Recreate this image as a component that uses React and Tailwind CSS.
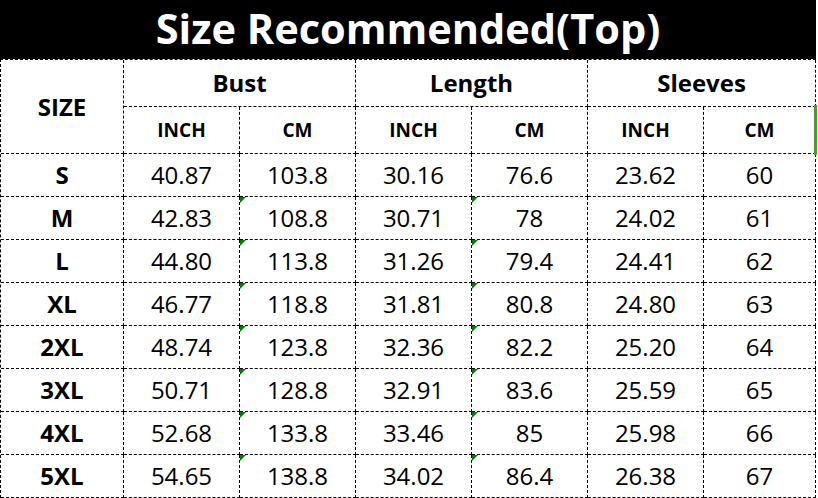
import React from "react";

const rows = [
  ["S", "40.87", "103.8", "30.16", "76.6", "23.62", "60"],
  ["M", "42.83", "108.8", "30.71", "78", "24.02", "61"],
  ["L", "44.80", "113.8", "31.26", "79.4", "24.41", "62"],
  ["XL", "46.77", "118.8", "31.81", "80.8", "24.80", "63"],
  ["2XL", "48.74", "123.8", "32.36", "82.2", "25.20", "64"],
  ["3XL", "50.71", "128.8", "32.91", "83.6", "25.59", "65"],
  ["4XL", "52.68", "133.8", "33.46", "85", "25.98", "66"],
  ["5XL", "54.65", "138.8", "34.02", "86.4", "26.38", "67"],
];

const cell = "border-r border-b border-dashed border-black flex items-center justify-center relative";

function Tri() {
  return (
    <div className="absolute left-0 top-0 w-0 h-0 border-t-[6px] border-t-[#008000] border-r-[6px] border-r-transparent" />
  );
}

export default function App() {
  return (
    <div
      className="w-[818px] h-[498px] bg-white relative overflow-hidden text-black"
      style={{ fontFamily: '"Open Sans", "Noto Sans", sans-serif' }}
    >
      <div className="h-[59px] w-[816px] bg-black flex items-center justify-center">
        <span className="text-white font-bold text-[41.5px] leading-none -mt-[1px]">
          Size Recommended(Top)
        </span>
      </div>
      <div className="grid w-[816px] grid-cols-[123px_116px_116px_116px_116px_116px_112px] grid-rows-[47px_47px_repeat(8,43px)] border-l border-t border-dashed border-black">
        <div className={`${cell} row-span-2 font-bold text-[24px]`}>SIZE</div>
        <div className={`${cell} col-span-2 font-bold text-[24px]`}>Bust</div>
        <div className={`${cell} col-span-2 font-bold text-[24px]`}>Length</div>
        <div className={`${cell} col-span-2 font-bold text-[24px]`}>Sleeves</div>
        {["INCH", "CM", "INCH", "CM", "INCH", "CM"].map((t, i) => (
          <div key={i} className={`${cell} font-bold text-[19px]`}>{t}</div>
        ))}
        {rows.map((r, ri) =>
          r.map((v, ci) => (
            <div
              key={`${ri}-${ci}`}
              className={`${cell} ${ci === 0 ? "font-bold text-[24px]" : "text-[24px]"}`}
            >
              {ri > 0 && (ci === 2 || ci === 4) && <Tri />}
              {v}
            </div>
          ))
        )}
      </div>
      <div className="absolute left-[814px] top-[105px] w-[3px] h-[50px] bg-[#4a9a30]" />
    </div>
  );
}
